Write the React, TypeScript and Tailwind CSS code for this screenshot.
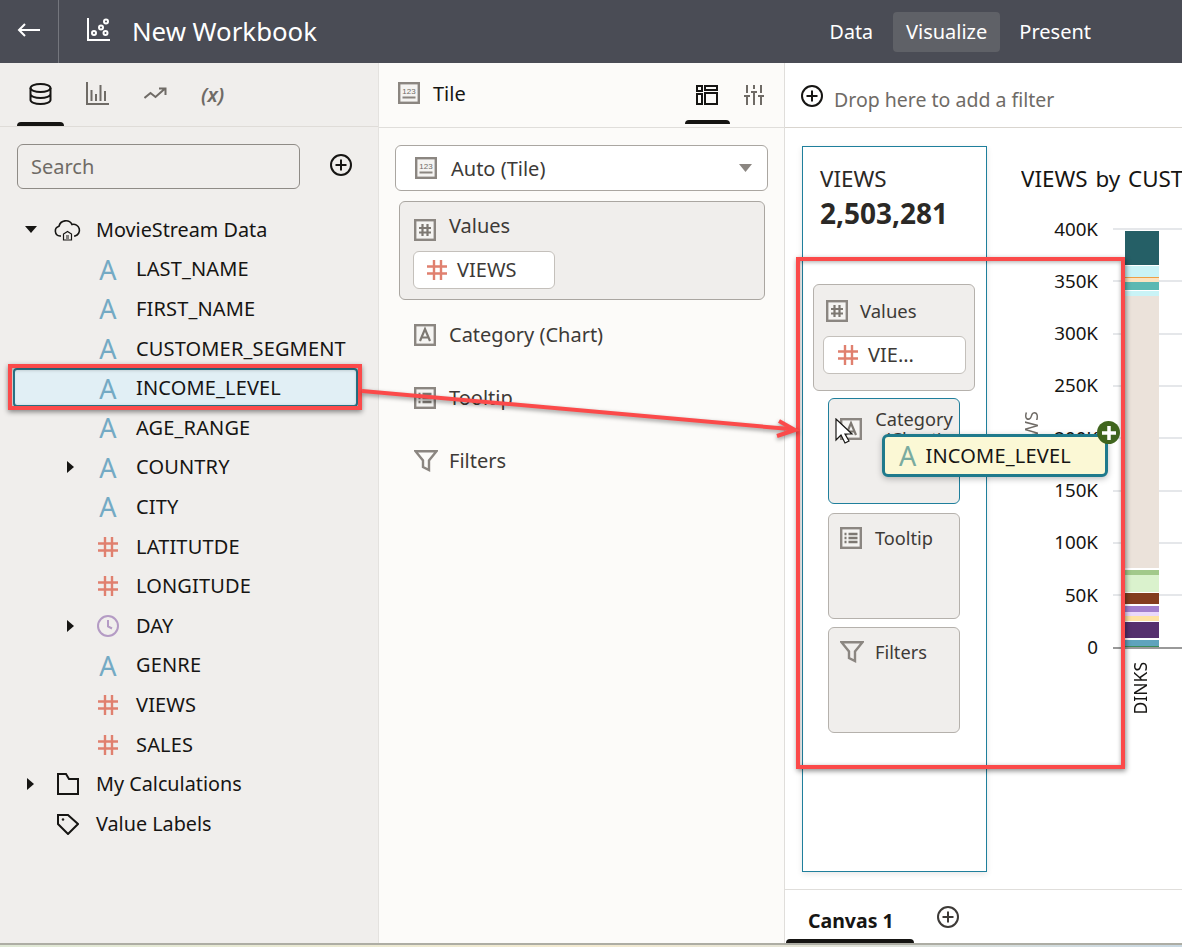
import type { ReactNode } from "react";

type FieldKind = "attr" | "num" | "time";

type Field = {
  name: string;
  kind: FieldKind;
  expandable?: boolean;
  selected?: boolean;
};

const FIELDS: Field[] = [
  { name: "LAST_NAME", kind: "attr" },
  { name: "FIRST_NAME", kind: "attr" },
  { name: "CUSTOMER_SEGMENT", kind: "attr" },
  { name: "INCOME_LEVEL", kind: "attr", selected: true },
  { name: "AGE_RANGE", kind: "attr" },
  { name: "COUNTRY", kind: "attr", expandable: true },
  { name: "CITY", kind: "attr" },
  { name: "LATITUTDE", kind: "num" },
  { name: "LONGITUDE", kind: "num" },
  { name: "DAY", kind: "time", expandable: true },
  { name: "GENRE", kind: "attr" },
  { name: "VIEWS", kind: "num" },
  { name: "SALES", kind: "num" },
];

const TICKS = ["400K", "350K", "300K", "250K", "200K", "150K", "100K", "50K", "0"];

const SEGMENTS = [
  { color: "#255f66", height: 34, gap: 1 },
  { color: "#c9f3f6", height: 11, gap: 0 },
  { color: "#ee9f45", height: 1, gap: 0 },
  { color: "#fbe3c0", height: 4, gap: 0 },
  { color: "#5cb8b2", height: 8, gap: 1 },
  { color: "#c9f3f6", height: 5, gap: 0 },
  { color: "#ebe2da", height: 272, gap: 2 },
  { color: "#a2c98b", height: 5, gap: 0 },
  { color: "#daf2cd", height: 17, gap: 1 },
  { color: "#843d1f", height: 11, gap: 2 },
  { color: "#a27fcd", height: 6, gap: 0 },
  { color: "#ead9fb", height: 4, gap: 0 },
  { color: "#fee3a4", height: 5, gap: 1 },
  { color: "#56306e", height: 16, gap: 2 },
  { color: "#5fa3bd", height: 6, gap: 0 },
  { color: "#3c8c5a", height: 1, gap: 0 },
];

function Plus({ size = 22, color = "#161513" }: { size?: number; color?: string }) {
  return (
    <svg width={size} height={size} viewBox="0 0 22 22" fill="none" stroke={color} strokeWidth="2">
      <circle cx="11" cy="11" r="10" />
      <path d="M11 5.500v11M5.500 11h11" />
    </svg>
  );
}

function Hash({ size = 20 }: { size?: number }) {
  return (
    <svg width={size} height={size} viewBox="0 0 20 20" fill="none" stroke="#e0806f" strokeWidth="2.400">
      <path d="M7 0v20M14 0v20M0 6.500h20M0 13.500h20" />
    </svg>
  );
}

function Caret({ open }: { open?: boolean }) {
  return open ? (
    <svg width="12" height="7" viewBox="0 0 12 7" fill="#161513">
      <path d="M0 0h12L6 7z" />
    </svg>
  ) : (
    <svg width="7" height="12" viewBox="0 0 7 12" fill="#161513">
      <path d="M0 0v12l7-6z" />
    </svg>
  );
}

function FrameIcon({ children }: { children: ReactNode }) {
  return (
    <svg width="22" height="22" viewBox="0 0 22 22" fill="none" stroke="#8b8681" strokeWidth="2.400" className="shrink-0">
      <rect x="1.200" y="1.200" width="19.600" height="19.600" fill="#f5f4f2" />
      {children}
    </svg>
  );
}

function TileIcon() {
  return (
    <FrameIcon>
      <text x="11" y="12" textAnchor="middle" fontSize="8" stroke="none" fill="#6f6b66" fontFamily="Liberation Sans, sans-serif">
        123
      </text>
      <path d="M4.500 15.500h13" strokeWidth="2" />
    </FrameIcon>
  );
}

function ValuesIcon() {
  return (
    <FrameIcon>
      <path d="M8.500 5v12M13.500 5v12M5 9h12M5 13.500h12" stroke="#7d7872" strokeWidth="2.200" />
    </FrameIcon>
  );
}

function CategoryIcon() {
  return (
    <FrameIcon>
      <path d="M6 17l5-12 5 12M7.500 13.500h7" stroke="#7d7872" strokeWidth="2.200" />
    </FrameIcon>
  );
}

function TooltipIcon() {
  return (
    <FrameIcon>
      <path d="M4.500 7h2M8.500 7h9M4.500 11h2M8.500 11h9M4.500 15h2M8.500 15h9" stroke="#7d7872" />
    </FrameIcon>
  );
}

function FilterIcon() {
  return (
    <svg width="24" height="22" viewBox="0 0 24 22" fill="none" stroke="#8b8681" strokeWidth="2.400" className="shrink-0">
      <path d="M1.500 1.200h21L15 10.500v9.500l-6-3v-6.500z" strokeLinejoin="miter" />
    </svg>
  );
}

function AttrGlyph({ className = "" }: { className?: string }) {
  return <span className={`text-[27px] font-normal leading-none text-[#74aac4] ${className}`}>A</span>;
}

function FieldIcon({ kind }: { kind: FieldKind }) {
  if (kind === "attr") return <AttrGlyph />;
  if (kind === "num") return <Hash />;
  return (
    <svg width="22" height="22" viewBox="0 0 22 22" fill="none" stroke="#b49bc4" strokeWidth="2">
      <circle cx="11" cy="11" r="10" />
      <path d="M11 5v6.500l4 2" />
    </svg>
  );
}

function FieldRow({ field }: { field: Field }) {
  return (
    <div className={`relative flex h-[39.6px] items-center text-[#161513] ${field.selected ? "z-0" : ""}`}>
      {field.selected && (
        <div className="absolute bottom-[1px] left-[13px] right-[20px] top-[0px] -z-10 rounded-[4px] border-2 border-[#2b7a8e] bg-[#e1eff5]" />
      )}
      <div className="flex w-[74px] shrink-0 justify-end">{field.expandable && <Caret />}</div>
      <div className="ml-[12px] flex w-[44px] shrink-0 justify-center">
        <FieldIcon kind={field.kind} />
      </div>
      <span className="ml-[6px] tracking-[0.15px]">{field.name}</span>
    </div>
  );
}

function DataPanel() {
  return (
    <aside className="flex w-[379px] shrink-0 flex-col border-r border-[#e4e2df] bg-[#f0eeec] text-[20px]">
      <div className="relative flex h-[64px] items-center border-b border-[#dfdcd8] pb-[2px]">
        <div className="ml-[29px]">
          <svg width="23" height="22" viewBox="0 0 23 22" fill="none" stroke="#161513" strokeWidth="2">
            <ellipse cx="11.500" cy="5" rx="10" ry="4" />
            <path d="M1.500 5v12c0 2.200 4.500 4 10 4s10-1.800 10-4V5M1.500 11c0 2.200 4.500 4 10 4s10-1.800 10-4" />
          </svg>
        </div>
        <div className="ml-[34px]">
          <svg width="23" height="23" viewBox="0 0 23 23" fill="none" stroke="#6f6b66" strokeWidth="2">
            <path d="M1 0v22h22M5.500 19V8M10 19V12M14.500 19V3M19 19V9" />
          </svg>
        </div>
        <div className="ml-[35px]">
          <svg width="23" height="14" viewBox="0 0 23 14" fill="none" stroke="#6f6b66" strokeWidth="2">
            <path d="M0.500 11l6-5 5 4 9-8M15 1.500h6.500V8" />
          </svg>
        </div>
        <span className="ml-[34px] mt-[2px] text-[20px] font-semibold italic text-[#6f6b66]">(x)</span>
        <div className="absolute bottom-0 left-[17px] h-[4px] w-[47px] rounded-t-[4px] bg-[#161513]" />
      </div>

      <div className="mt-[17px] flex items-center">
        <div className="ml-[17px] flex h-[45px] w-[283px] items-center rounded-[6px] border border-[#8f8b86] px-[13px] text-[#6f6b66]">
          Search
        </div>
        <div className="ml-[30px] -mt-[4px]">
          <Plus />
        </div>
      </div>

      <div className="mt-[21px] flex h-[39.6px] items-center text-[#161513]">
        <div className="ml-[25px] w-[12px]">
          <Caret open />
        </div>
        <div className="ml-[17px]">
          <svg width="27" height="22" viewBox="0 0 27 22" fill="none" stroke="#161513" strokeWidth="1.600">
            <path d="M7 17H6a5 5 0 0 1-1-9.800A7 7 0 0 1 18 5.500 5.500 5.500 0 0 1 21 17h-1" />
            <path d="M9.500 21v-6l4-2.500 4 2.500v6zM12 17h3M12 19h3" strokeWidth="1.200" />
          </svg>
        </div>
        <span className="ml-[15px] text-[19.8px]">MovieStream Data</span>
      </div>

      {FIELDS.map((field) => (
        <FieldRow key={field.name} field={field} />
      ))}

      <div className="flex h-[39.6px] items-center text-[#161513]">
        <div className="ml-[27px] w-[7px]">
          <Caret />
        </div>
        <div className="ml-[23px] w-[22px]">
          <svg width="22" height="22" viewBox="0 0 22 22" fill="none" stroke="#161513" strokeWidth="2">
            <path d="M1 21V1h8l3 5h9v15z" />
          </svg>
        </div>
        <span className="ml-[17px] text-[19.8px]">My Calculations</span>
      </div>
      <div className="flex h-[39.6px] items-center text-[#161513]">
        <div className="ml-[57px] w-[22px]">
          <svg width="22" height="22" viewBox="0 0 22 22" fill="none" stroke="#161513" strokeWidth="2">
            <path d="M1 2h10l10 9-10 10-10-10z" />
            <circle cx="6" cy="6.500" r="1" fill="#161513" strokeWidth="0.500" />
          </svg>
        </div>
        <span className="ml-[17px] text-[19.8px]">Value Labels</span>
      </div>
    </aside>
  );
}

function GrammarRow({ icon, label, className = "" }: { icon: ReactNode; label: string; className?: string }) {
  return (
    <div className={`ml-[35px] flex items-center gap-[13px] text-[#3d3a37] ${className}`}>
      {icon}
      <span>{label}</span>
    </div>
  );
}

function GrammarPanel() {
  return (
    <section className="flex w-[406px] shrink-0 flex-col border-r border-[#e0dedb] bg-[#fcfbf9] text-[20px]">
      <div className="relative flex h-[65px] items-center border-b border-[#e0dedb] pb-[4px] pl-[19px]">
        <TileIcon />
        <span className="ml-[13px] mt-[2px] text-[#161513]">Tile</span>
        <div className="absolute left-[317px] top-[22px]">
          <svg width="22" height="20" viewBox="0 0 22 20" fill="none" stroke="#161513" strokeWidth="2">
            <path d="M1 1h5v5H1zM1 9h5v10H1zM9 1h12v4H9zM9 8h12v11H9z" />
          </svg>
        </div>
        <div className="absolute left-[365px] top-[22px]">
          <svg width="20" height="20" viewBox="0 0 20 20" fill="none" stroke="#6f6b66" strokeWidth="2">
            <path d="M3 0v8M3 11v9M0 11h6M10 0v4M10 7v13M7 7h6M17 0v8M17 11v9M14 11h6" />
          </svg>
        </div>
        <div className="absolute bottom-[3px] left-[306px] h-[4px] w-[45px] rounded-t-[4px] bg-[#161513]" />
      </div>

      <div className="mx-[16px] mt-[17px] flex h-[46px] items-center rounded-[6px] border border-[#aaa6a1] bg-white pl-[19px] text-[#3d3a37]">
        <TileIcon />
        <span className="ml-[14px] mt-[2px]">Auto (Tile)</span>
        <svg width="13" height="8" viewBox="0 0 13 8" fill="#8b8681" className="ml-auto mr-[15px]">
          <path d="M0 0h13L6.500 8z" />
        </svg>
      </div>

      <div className="ml-[20px] mr-[19px] mt-[10px] h-[99px] rounded-[6px] border border-[#aaa6a1] bg-[#f0eeec] px-[13px] pt-[13px]">
        <div className="flex items-center gap-[13px] pl-[1px] text-[#3d3a37]">
          <div className="mt-[3px]">
            <ValuesIcon />
          </div>
          <span className="-mt-[4px]">Values</span>
        </div>
        <div className="mt-[10px] flex h-[38px] w-[142px] items-center gap-[10px] rounded-[6px] border border-[#c4c0bb] bg-white pl-[13px] text-[#3d3a37]">
          <Hash />
          <span>VIEWS</span>
        </div>
      </div>

      <GrammarRow icon={<CategoryIcon />} label="Category (Chart)" className="mt-[21px] h-[28px]" />
      <GrammarRow icon={<TooltipIcon />} label="Tooltip" className="mt-[35px] h-[28px]" />
      <GrammarRow icon={<FilterIcon />} label="Filters" className="mt-[35px] h-[28px] !gap-[11px]" />
    </section>
  );
}

function DropBox({ icon, label, className = "" }: { icon: ReactNode; label: string; className?: string }) {
  return (
    <div className={`ml-[25px] h-[106px] w-[132px] rounded-[6px] border bg-[#f0eeec] pl-[11px] text-[#3d3a37] ${className}`}>
      <div className="flex items-center gap-[13px] text-[18.2px] leading-[20px]">
        {icon}
        <span className="max-w-[78px] text-center">{label}</span>
      </div>
    </div>
  );
}

function TileViz() {
  return (
    <div className="ml-[17px] mt-[18px] h-[726px] w-[185px] shrink-0 border border-[#1f7f9c] bg-white shadow-[0_2px_6px_rgba(0,0,0,0.1)]">
      <div className="pl-[17px] pt-[16px] text-[#2b2926]">
        <div className="text-[22.4px] leading-[32px]">VIEWS</div>
        <div className="text-[28px] font-bold leading-[36px]">2,503,281</div>
      </div>
      <div className="ml-[10px] mt-[53px] h-[107px] w-[162px] rounded-[6px] border border-[#b5b1ac] bg-[#f0eeec] px-[9px] pt-[12px] text-[#3d3a37]">
        <div className="flex items-center gap-[12px] pl-[3px] text-[18.5px]">
          <ValuesIcon />
          <span>Values</span>
        </div>
        <div className="mt-[11px] flex h-[38px] w-[143px] items-center gap-[10px] rounded-[6px] border border-[#c4c0bb] bg-white pl-[14px] text-[20px]">
          <Hash />
          <span>VIE...</span>
        </div>
      </div>
      <DropBox icon={<CategoryIcon />} label="Category (Chart)" className="mt-[7px] border-[#1f7f9c] pt-[10px]" />
      <DropBox icon={<TooltipIcon />} label="Tooltip" className="mt-[9px] border-[#b5b1ac] pt-[13px]" />
      <DropBox
        icon={
          <div className="-mr-[2px]">
            <FilterIcon />
          </div>
        }
        label="Filters"
        className="mt-[8px] border-[#b5b1ac] pt-[13px]"
      />
    </div>
  );
}

function BarChart() {
  return (
    <div className="relative min-w-0 flex-1 overflow-hidden pl-[34px] pt-[36px]">
      <div className="h-[30px] overflow-hidden whitespace-nowrap text-[22.4px] leading-[30px] text-[#161513] [word-spacing:2px]">
        VIEWS by CUST
      </div>
      <div className="relative mt-[9px]">
        {TICKS.map((tick) => (
          <div key={tick} className="flex h-[52.3px] items-center">
            <span className="-mt-[1px] w-[77px] text-right text-[18.8px] text-[#161513]">{tick}</span>
            <div className={`ml-[15px] h-[2px] flex-1 ${tick === "0" ? "bg-[#999999]" : "bg-[#e5e7ea]"}`} />
          </div>
        ))}
        <div className="absolute left-[104px] top-[28px] flex w-[34px] flex-col">
          {SEGMENTS.map((segment, index) => (
            <div
              key={index}
              style={{ backgroundColor: segment.color, height: segment.height, marginBottom: segment.gap }}
            />
          ))}
        </div>
        <span className="absolute left-[0px] top-[208px] rotate-180 text-[18px] leading-[20px] text-[#6f6b66] [writing-mode:vertical-rl]">
          VIEWS
        </span>
        <span className="absolute left-[109px] top-[459px] rotate-180 text-[17.500px] leading-[20px] text-[#161513] [writing-mode:vertical-rl]">
          DINKS
        </span>
      </div>
    </div>
  );
}

function Annotations() {
  return (
    <>
      <div className="absolute left-[8px] top-[364px] h-[46px] w-[354px] border-[4px] border-[#fb4a4a] shadow-[0_2px_5px_rgba(0,0,0,0.45),inset_0_1px_4px_rgba(0,0,0,0.35)]" />
      <div className="absolute left-[796px] top-[257px] h-[512px] w-[329px] border-[4px] border-[#fb4a4a] shadow-[1px_2px_5px_rgba(0,0,0,0.45),inset_0_1px_4px_rgba(0,0,0,0.35)]" />
      <svg
        className="absolute left-[355px] top-[380px] drop-shadow-[0_2px_2px_rgba(0,0,0,0.4)]"
        width="450"
        height="65"
        viewBox="0 0 450 65"
        fill="none"
      >
        <path d="M7 11L435 49" stroke="#fb4a4a" strokeWidth="4" />
        <path d="M424 41l16 9-18 6" stroke="#fb4a4a" strokeWidth="4" />
      </svg>
      <svg className="absolute left-[835px] top-[418px]" width="28" height="28" viewBox="0 0 28 28" fill="#ffffff" stroke="#161513" strokeWidth="1.200">
        <path d="M1 1v21l5-5 4 8 4-2-4-7h7z" />
      </svg>
      <div className="absolute left-[882px] top-[434px] flex h-[43px] w-[226px] items-center gap-[9px] rounded-[6px] border-[3px] border-[#1f7a8c] bg-[#fbf8d5] pl-[14px] text-[20px] tracking-[0.2px] text-[#161513] shadow-[0_2px_6px_rgba(0,0,0,0.25)]">
        <AttrGlyph className="!text-[#79ab9f]" />
        <span>INCOME_LEVEL</span>
      </div>
      <div className="absolute left-[1097px] top-[421px] flex h-[23px] w-[23px] items-center justify-center rounded-full bg-[#40651e]">
        <svg width="14" height="14" viewBox="0 0 14 14" fill="none" stroke="#ffffff" strokeWidth="3.500">
          <path d="M7 0v14M0 7h14" />
        </svg>
      </div>
    </>
  );
}

export default function App() {
  return (
    <div className="relative flex h-[947px] w-[1182px] flex-col overflow-hidden bg-white font-['Noto_Sans',sans-serif]">
      <header className="flex h-[63px] shrink-0 items-center bg-[#4a4c55] text-white">
        <div className="flex h-full w-[59px] items-center border-r border-[#74767d] pl-[17px]">
          <svg width="23" height="14" viewBox="0 0 23 14" fill="none" stroke="#ffffff" strokeWidth="2" className="-mt-[4px]">
            <path d="M23 7H2M8 1L2 7l6 6" />
          </svg>
        </div>
        <div className="ml-[28px] -mt-[5px]">
          <svg width="23" height="23" viewBox="0 0 23 23" fill="none" stroke="#ffffff" strokeWidth="2">
            <path d="M1 0v22h22" />
            <circle cx="7" cy="15" r="2" />
            <circle cx="14" cy="9.500" r="2" />
            <circle cx="19" cy="3.500" r="2" />
            <circle cx="18.500" cy="15" r="2" />
          </svg>
        </div>
        <span className="ml-[22px] text-[25.8px]">New Workbook</span>
        <nav className="ml-auto mr-[91px] flex items-center text-[20px]">
          <span className="text-[19.6px]">Data</span>
          <span className="ml-[20px] rounded-[4px] bg-[#5f6167] px-[13px] py-[6px] leading-[28px]">Visualize</span>
          <span className="ml-[19px]">Present</span>
        </nav>
      </header>

      <div className="flex min-h-0 flex-1">
        <DataPanel />
        <GrammarPanel />
        <main className="flex min-w-0 flex-1 flex-col">
          <div className="flex h-[65px] shrink-0 items-center gap-[11px] border-b border-[#d9d5cf] pl-[16px] pt-[9px] text-[19.5px] text-[#6f6b66]">
            <div className="-mt-[7px]">
              <Plus />
            </div>
            <span>Drop here to add a filter</span>
          </div>
          <div className="flex min-h-0 flex-1 border-b border-[#e0dedb]">
            <TileViz />
            <BarChart />
          </div>
          <div className="relative flex h-[53px] shrink-0">
            <span className="ml-[23px] mt-[16px] text-[19.5px] font-bold text-[#161513]">Canvas 1</span>
            <div className="ml-[43px] mt-[16px]">
              <Plus color="#3d3a37" />
            </div>
            <div className="absolute bottom-0 left-[1px] h-[4px] w-[128px] rounded-t-[4px] bg-[#161513]" />
          </div>
        </main>
      </div>

      <div className="h-[2px] shrink-0 bg-[#adada4]" />
      <div className="h-[2px] shrink-0 bg-gradient-to-r from-[#dfe8d5] via-[#f3ead0] to-[#c9d8e2]" />

      <Annotations />
    </div>
  );
}
